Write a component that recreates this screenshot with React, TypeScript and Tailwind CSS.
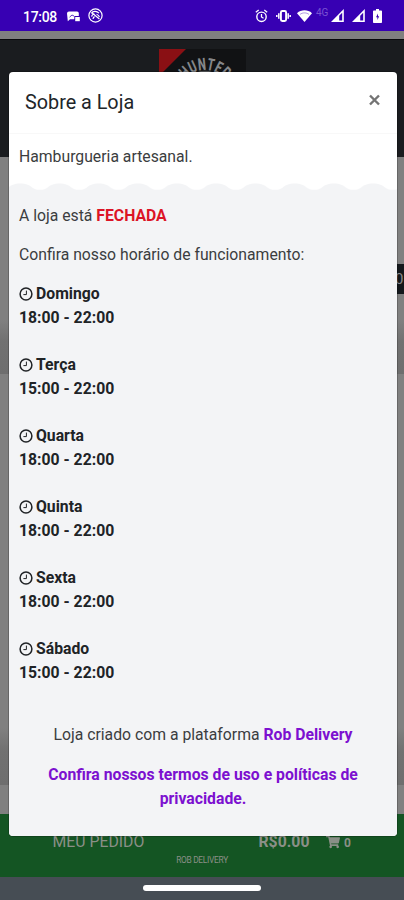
import React from 'react';
import { FaShoppingCart } from 'react-icons/fa';

interface Schedule {
  day: string;
  hours: string;
}

const schedules: Schedule[] = [
  { day: 'Domingo', hours: '18:00 - 22:00' },
  { day: 'Terça', hours: '15:00 - 22:00' },
  { day: 'Quarta', hours: '18:00 - 22:00' },
  { day: 'Quinta', hours: '18:00 - 22:00' },
  { day: 'Sexta', hours: '18:00 - 22:00' },
  { day: 'Sábado', hours: '15:00 - 22:00' },
];

function ClockIcon() {
  return (
    <svg className="w-[14px] h-[14px] mr-[3px] shrink-0" viewBox="0 0 14 14" fill="none" stroke="currentColor">
      <circle cx="7" cy="7" r="5.9" strokeWidth="1.5" />
      <path d="M7.4 3.6V7.6H4.4" strokeWidth="1" />
    </svg>
  );
}

function SignalIcon() {
  return (
    <svg className="w-[13px] h-[13px]" viewBox="0 0 13 13" fill="white">
      <path fillRule="evenodd" d="M12.8 0V13H0L12.8 0ZM11.2 3.8L8.2 6.8V11.6H11.2V3.8Z" />
    </svg>
  );
}

function StatusBar() {
  return (
    <div className="h-[31px] shrink-0 bg-[#3700b3] flex items-center pl-[23px] pr-[22px] text-white">
      <span className="text-[14px] leading-none font-medium tracking-[-0.3px] w-[44px] pt-[2px]">17:08</span>
      <svg className="w-[13px] h-[11px] mt-[2px]" viewBox="0 0 13 11" fill="white">
        <path d="M2 .5h8a1.8 1.8 0 0 1 1.8 1.8V5H7.3v3.2H3L.8 10.2 0 2.5A2 2 0 0 1 2 .5Z" />
        <path d="M8.2 6h4.6v4.2H8.2z" />
        <path d="M2.5 6.2 5 4l2 1" stroke="#3700b3" strokeWidth=".8" fill="none" />
      </svg>
      <svg className="w-[15px] h-[15px] ml-[8px]" viewBox="0 0 15 15" fill="none" stroke="white">
        <circle cx="7.5" cy="7.5" r="6.6" strokeWidth="1.2" />
        <path d="M3.3 5.3C5 3 8.5 2.6 11 5.2M4.2 5l7.2 6M3.6 8.6C4 6.8 5 6 6.6 6M8.6 6.2c1.6.6 2.6 1.6 2.8 3M5 11c.2-1.4.6-2 1.6-2.4" strokeWidth="1.2" />
      </svg>
      <div className="flex-1" />
      <svg className="w-[13px] h-[14px] mr-[8px]" viewBox="0 0 13 14" fill="none" stroke="white">
        <circle cx="6.5" cy="7.8" r="4.7" strokeWidth="1.4" />
        <path d="M.8 3.2 3.7.9M9.3.9l2.9 2.3M6.5 5v3l2 1.2" strokeWidth="1.3" />
      </svg>
      <svg className="w-[15px] h-[12px] mr-[6px]" viewBox="0 0 15 12" fill="none" stroke="white">
        <rect x="4.9" y="1" width="5.2" height="10" rx="1.4" strokeWidth="1.9" />
        <path d="M2.8 3.2v5.6M12.2 3.2v5.6M.8 5v2M14.2 5v2" strokeWidth="1.5" />
      </svg>
      <svg className="w-[15px] h-[12px] mr-[4px]" viewBox="0 0 15 12" fill="white">
        <path d="M0 3.2C4.2-.6 10.8-.6 15 3.2L7.5 12 0 3.2Z" />
        <path d="M3 4.4c2.7-2 6.3-2 9 0" stroke="#3700b3" strokeWidth=".4" fill="none" />
      </svg>
      <span className="text-[10px] leading-none text-[#7a52d2] w-[15px] -mt-[5px]">4G</span>
      <SignalIcon />
      <span className="w-[8px]" />
      <SignalIcon />
      <svg className="w-[9px] h-[14px] ml-[8px]" viewBox="0 0 9 14" fill="white">
        <path fillRule="evenodd" d="M3 0h3v1.4h2.2c.5 0 .8.3.8.8v11c0 .5-.3.8-.8.8H.8c-.5 0-.8-.3-.8-.8v-11c0-.5.3-.8.8-.8H3V0Zm2 4.6L3 8.2h1.4v2.8l1.8-3.8H5V4.6Z" />
      </svg>
    </div>
  );
}

function StoreLogo() {
  return (
    <svg className="w-[87px] h-[34px]" viewBox="0 0 87 34">
      <rect width="87" height="34" fill="#111214" />
      <path d="M0 0h27L0 27z" fill="#8a1014" />
      <defs>
        <path id="logo-arc" d="M22 45A24 24 0 0 1 70 45" />
      </defs>
      <text fill="#85878a" fontSize="17" fontWeight="800" fontFamily="Roboto, sans-serif">
        <textPath href="#logo-arc" startOffset="15.5" textLength="44" lengthAdjust="spacingAndGlyphs">
          HUNTER
        </textPath>
      </text>
      <circle cx="46" cy="42" r="19.5" fill="none" stroke="#606265" strokeWidth="1.5" />
    </svg>
  );
}

function StorePage() {
  return (
    <div className="flex flex-col h-full">
      <StatusBar />
      <div className="h-2 shrink-0 bg-[#808080]" />
      <div className="h-[118px] shrink-0 bg-[#1a1c1f] border-t border-[#08090b] pt-[9px] pl-[159px]">
        <StoreLogo />
      </div>
      <div className="flex-1 bg-[#808080] flex flex-col items-end">
        <div className="mt-[107px] h-[30px] w-[20px] bg-[#14181c] text-[#8a8a8a] text-[15px] leading-[30px] overflow-hidden pl-[11px]">
          0
        </div>
        <div className="mt-[26px] h-[54px] w-full bg-linear-to-b from-[#808080] via-[#717171] via-40% to-[#6e6e6e]" />
        <div className="mt-[354px] h-[57px] w-full bg-linear-to-b from-[#808080] via-[#717171] via-40% to-[#6e6e6e]" />
      </div>
      <div className="h-[63px] shrink-0 bg-[#145523] text-[#8a8f87]">
        <div className="flex items-center h-[24px] mt-[16px] pl-[52.5px] text-[15.8px]">
          <span className="w-[206px]">MEU PEDIDO</span>
          <span className="w-[67.5px] font-bold">R$0.00</span>
          <FaShoppingCart className="w-[14px] h-[14px] mr-[4px]" />
          <span className="text-[12px] font-bold pt-[2px]">0</span>
        </div>
        <div className="text-center text-[8.4px] leading-[12px] tracking-[-0.3px]">ROB DELIVERY</div>
      </div>
      <div className="h-[23px] shrink-0 bg-[#464d54] flex justify-center">
        <div className="mt-[8px] h-[6px] w-[118px] rounded-full bg-white" />
      </div>
    </div>
  );
}

function Waves() {
  return (
    <svg className="block w-full h-[9px]" viewBox="0 0 388 9">
      <defs>
        <pattern id="waves" x="-8.3" width="39.2" height="9" patternUnits="userSpaceOnUse">
          <path d="M0 7.8C3 7.8 5 7.4 7 6C10.5 3.2 13.5 1.5 19.6 1.5S28.7 3.2 32.2 6C34.2 7.4 36.2 7.8 39.2 7.8V9H0Z" fill="#f3f4f6" />
        </pattern>
      </defs>
      <rect width="388" height="9" fill="url(#waves)" />
    </svg>
  );
}

function StoreModal() {
  return (
    <div className="absolute left-[9px] top-[72px] w-[388px] h-[764px] flex flex-col rounded-[4px] overflow-hidden bg-white text-[15.75px] leading-[23.65px] text-[#3b3d40] shadow-[0_0_0_1px_rgba(0,0,0,0.2)]">
      <div className="h-[62px] shrink-0 flex items-start justify-between border-b border-[#f8f8f8] pl-[16px] pr-[16px]">
        <h5 className="pt-[16px] text-[19.8px] leading-[30px] text-[#212529]">Sobre a Loja</h5>
        <button className="pt-[22px]" aria-label="Fechar">
          <svg className="w-[13px] h-[12px]" viewBox="0 0 13 12" stroke="#747474" strokeWidth="2.4">
            <path d="M2 1.5l9 9M11 1.5l-9 9" />
          </svg>
        </button>
      </div>
      <p className="h-[48px] shrink-0 pl-[10px] pt-[11px]">Hamburgueria artesanal.</p>
      <Waves />
      <div className="flex-1 bg-[#f3f4f6] px-[10px] pt-[12.6px]">
        <p>
          A loja está <b className="text-[#dc1426]">FECHADA</b>
        </p>
        <p className="mt-[16px]">Confira nosso horário de funcionamento:</p>
        <div className="mt-[15.5px] font-bold text-[#202326]">
          {schedules.map((item) => (
            <div key={item.day} className="mb-[23.6px]">
              <div className="flex items-center">
                <ClockIcon />
                {item.day}
              </div>
              <div>{item.hours}</div>
            </div>
          ))}
        </div>
        <p className="mt-[39px] text-center">
          Loja criado com a plataforma <b className="text-[#7c10d0]">Rob Delivery</b>
        </p>
        <p className="mt-[16px] text-center font-bold text-[#7c10d0]">
          Confira nossos termos de uso e políticas de privacidade.
        </p>
      </div>
    </div>
  );
}

export default function App() {
  return (
    <div className="relative w-[404px] h-[900px] overflow-hidden font-[Roboto,sans-serif]">
      <StorePage />
      <StoreModal />
    </div>
  );
}
